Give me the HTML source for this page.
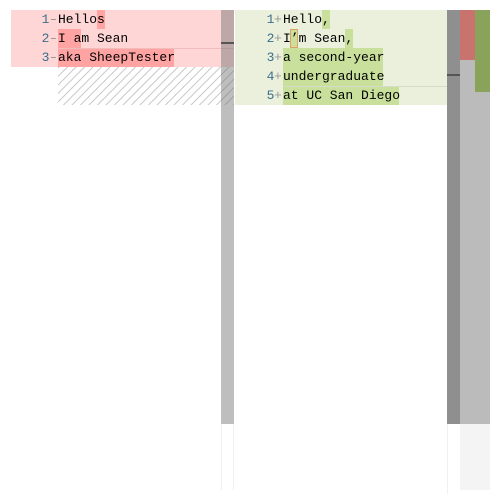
<!DOCTYPE html><html><head><style>
body{margin:0;width:500px;height:500px;background:#fff;position:relative;overflow:hidden;font-family:"Liberation Mono",monospace;font-size:13px}
div{position:absolute}
.t{color:#000;white-space:pre;line-height:19px}
</style></head><body>
<div style="left:11px;top:10px;width:223px;height:57px;background:#ffd6d6"></div>
<div style="left:58px;top:67px;width:176px;height:38px;background:repeating-linear-gradient(-45deg,#ccc 0 1px,transparent 1px 6px)"></div>
<div style="left:97px;top:10px;width:8px;height:19px;background:#ffa3a3"></div>
<div style="left:58px;top:29px;width:23px;height:19px;background:#ffa3a3"></div>
<div style="left:58px;top:48px;width:116px;height:19px;background:#ffa3a3"></div>
<div style="left:58px;top:48px;width:176px;height:1px;background:#f0bcbc"></div>
<div class="t" style="left:26px;top:10px;color:#3b6f8a">  1<br>  2<br>  3</div>
<div class="t" style="left:48px;top:10px;color:#9a9a9a;transform:scaleX(1.4);transform-origin:left">-<br>-<br>-</div>
<div class="t" style="left:58px;top:10px">Hellos<br>I am Sean<br>aka SheepTester</div>
<div style="left:221px;top:10px;width:13px;height:414px;background:rgba(110,110,110,.45)"></div>
<div style="left:221px;top:42px;width:13px;height:2px;background:#555"></div>
<div style="left:221px;top:424px;width:13px;height:66px;border-left:1px solid #f0f0f0;border-right:1px solid #f0f0f0;box-sizing:border-box"></div>
<div style="left:235px;top:10px;width:212px;height:95px;background:#eaf0dc"></div>
<div style="left:322px;top:10px;width:8px;height:19px;background:#c8e09c"></div>
<div style="left:290px;top:29px;width:8px;height:19px;background:#c8e09c;outline:1px solid #e0a060;outline-offset:-1px"></div>
<div style="left:345px;top:29px;width:8px;height:19px;background:#c8e09c"></div>
<div style="left:283px;top:48px;width:100px;height:38px;background:#c8e09c"></div>
<div style="left:283px;top:86px;width:116px;height:19px;background:#c8e09c"></div>
<div style="left:283px;top:86px;width:164px;height:1px;background:#d5dcc8"></div>
<div class="t" style="left:251px;top:10px;color:#3b6f8a">  1<br>  2<br>  3<br>  4<br>  5</div>
<div class="t" style="left:274px;top:10px;color:#9a9a9a">+<br>+<br>+<br>+<br>+</div>
<div class="t" style="left:283px;top:10px">Hello,<br>I’m Sean,<br>a second-year<br>undergraduate<br>at UC San Diego</div>
<div style="left:447px;top:10px;width:13px;height:414px;background:#8f8f8f"></div>
<div style="left:447px;top:74px;width:13px;height:2px;background:#555"></div>
<div style="left:460px;top:10px;width:30px;height:414px;background:#bbb"></div>
<div style="left:460px;top:10px;width:15px;height:50px;background:#c8736e"></div>
<div style="left:475px;top:10px;width:15px;height:82px;background:#8aa35a"></div>
<div style="left:460px;top:424px;width:30px;height:66px;background:#f4f4f4"></div>
<div style="left:447px;top:424px;width:1px;height:70px;background:#f0f0f0"></div>
</body></html>
